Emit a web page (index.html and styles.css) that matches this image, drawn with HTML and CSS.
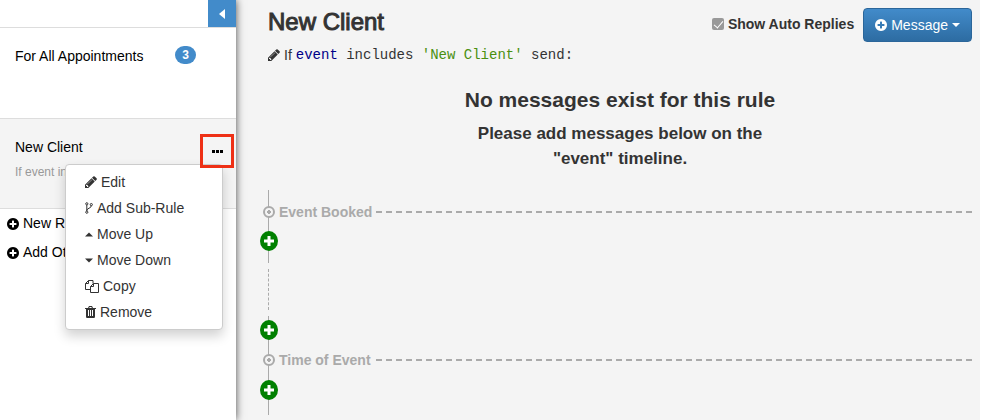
FILE: index.html
```html
<!DOCTYPE html>
<html lang="en">

<head>
    <meta charset="UTF-8">
    <meta name="viewport" content="width=device-width, initial-scale=1.0">
    <title>New Client</title>
    <link rel="stylesheet" href="styles.css">
</head>

<body>
    <!-- shared icons -->
    <svg class="sprite" aria-hidden="true">
        <symbol id="pencil" viewBox="0 0 1536 1536">
            <path d="M363 1408l91-91-235-235-91 91v107h128v128h107zM886 480q0-22-22-22-10 0-17 7l-542 542q-7 7-7 17 0 22 22 22 10 0 17-7l542-542q7-7 7-17zM832 288l416 416-832 832H0v-416zM1515 384q0 53-37 90l-166 166-416-416 166-165q36-38 90-38 53 0 91 38l235 234q37 39 37 91z" />
        </symbol>
        <symbol id="plus" viewBox="0 0 1536 1536">
            <path d="M1216 832V704q0-26-19-45t-45-19H896V384q0-26-19-45t-45-19H704q-26 0-45 19t-19 45v256H384q-26 0-45 19t-19 45v128q0 26 19 45t45 19h256v256q0 26 19 45t45 19h128q26 0 45-19t19-45V896h256q26 0 45-19t19-45zm320-64q0 209-103 385.5T1153.5 1433 768 1536t-385.5-103T103 1153.5 0 768t103-385.5T382.5 103 768 0t385.5 103T1433 382.5 1536 768z" />
        </symbol>
    </svg>

    <div class="page">
        <aside class="sidebar">
            <div class="sidebar-top">
                <button class="collapse" type="button" aria-label="Collapse sidebar">
                    <svg width="6" height="10" viewBox="0 0 6 10"><path d="M6 0v10L0 5z" /></svg>
                </button>
            </div>
            <div class="rule">
                <span class="rule-name">For All Appointments</span>
                <span class="badge">3</span>
            </div>
            <div class="rule active">
                <div class="rule-text">
                    <div class="rule-name">New Client</div>
                    <div class="rule-desc">If event includes</div>
                </div>
                <button class="more" type="button" aria-label="Rule options">
                    <svg width="11" height="3" viewBox="0 0 11 3"><path d="M0 0h3v3H0zM4 0h3v3H4zM8 0h3v3H8z" /></svg>
                </button>
                <div class="menu">
                    <button type="button"><svg width="12" height="12"><use href="#pencil" /></svg>Edit</button>
                    <button type="button">
                        <svg class="line" width="8" height="12" viewBox="0 0 8 12"><circle cx="1.8" cy="1.8" r="1.1" /><circle cx="1.8" cy="10.2" r="1.1" /><circle cx="6.3" cy="2.6" r="1.1" /><path d="M1.8 3v6M6.3 3.7c0 3-4.5 2-4.5 5" /></svg>Add Sub-Rule
                    </button>
                    <button type="button"><svg width="8" height="12" viewBox="0 0 8 12"><path d="M0 8.500L4 4.500l4 4z" /></svg>Move Up</button>
                    <button type="button"><svg width="8" height="12" viewBox="0 0 8 12"><path d="M0 4.500h8l-4 4z" /></svg>Move Down</button>
                    <button type="button">
                        <svg class="line" width="14" height="14" viewBox="0 0 14 14"><path d="M5.500 10.500h-5v-6l3-3h4.500v3M3.500 1.500v3h-3M5.500 7.500l3-3h5v9h-8zM8.500 4.500v3h-3" /></svg>Copy
                    </button>
                    <button type="button">
                        <svg width="11" height="12" viewBox="0 0 11 12"><path fill-rule="evenodd" d="M3 2l1-2h3l1 2h3v1h-1v7.500Q10 12 9 12H2Q1 12 1 10.500V3H0V2zM4.200 2h2.600L6.400 1H4.600zM3 4v6h1V4zM5 4v6h1V4zM7 4v6h1V4z" /></svg>Remove
                    </button>
                </div>
            </div>
            <div class="links">
                <a href="#"><svg width="12" height="12"><use href="#plus" /></svg>New Rule</a>
                <a href="#"><svg width="12" height="12"><use href="#plus" /></svg>Add Other</a>
            </div>
        </aside>

        <main class="content">
            <div class="head">
                <div>
                    <h1>New Client</h1>
                    <p class="condition">
                        <svg width="12" height="12"><use href="#pencil" /></svg>
                        <span>If</span>
                        <code><span class="var">event</span> includes <span class="str">'New Client'</span> send:</code>
                    </p>
                </div>
                <div class="actions">
                    <label><input type="checkbox" checked>Show Auto Replies</label>
                    <button class="message" type="button">
                        <svg width="12" height="12"><use href="#plus" /></svg>Message
                        <svg width="8" height="4" viewBox="0 0 8 4"><path d="M0 0h8L4 4z" /></svg>
                    </button>
                </div>
            </div>

            <div class="empty">
                <h2>No messages exist for this rule</h2>
                <p>Please add messages below on the<br>"event" timeline.</p>
            </div>

            <div class="timeline">
                <div class="segment">
                    <div class="event"><span class="dot"></span>Event Booked</div>
                    <button class="add" type="button" aria-label="Add message"><svg width="12" height="12" viewBox="0 0 12 12"><path d="M6 1v10M1 6h10" /></svg></button>
                </div>
                <div class="gap"></div>
                <div class="segment">
                    <button class="add" type="button" aria-label="Add message"><svg width="12" height="12" viewBox="0 0 12 12"><path d="M6 1v10M1 6h10" /></svg></button>
                    <div class="event"><span class="dot"></span>Time of Event</div>
                    <button class="add" type="button" aria-label="Add message"><svg width="12" height="12" viewBox="0 0 12 12"><path d="M6 1v10M1 6h10" /></svg></button>
                </div>
            </div>
        </main>
    </div>
</body>

</html>
```
FILE: styles.css
```css
* {
    box-sizing: border-box;
    margin: 0;
    padding: 0;
}

body {
    font-family: "Liberation Sans", Arial, sans-serif;
    font-size: 14px;
    line-height: 20px;
    color: #333;
    background: #fff;
}

button {
    font: inherit;
    color: inherit;
    border: none;
    background: none;
    cursor: pointer;
}

svg {
    fill: currentColor;
    flex: none;
}

.sprite {
    display: none;
}

.page {
    display: flex;
    min-height: 100vh;
    padding-right: 20px;
}

/* sidebar */
.sidebar {
    position: relative;
    flex: none;
    width: 236px;
    background: #fff;
    color: #000;
    box-shadow: 0 0 8px rgba(0, 0, 0, 0.7);
}

.sidebar-top {
    display: flex;
    justify-content: flex-end;
    border-bottom: 1px solid #ddd;
}

.collapse {
    display: flex;
    align-items: center;
    justify-content: center;
    width: 28px;
    height: 27px;
    background: #428bca;
    color: #fff;
}

.rule {
    position: relative;
    display: flex;
    align-items: flex-start;
    justify-content: space-between;
    min-height: 91px;
    padding: 18px 40px 0 15px;
    border-bottom: 1px solid #ddd;
}

.rule.active {
    min-height: 90px;
    padding: 15px 2px 0 15px;
    background: #f4f4f4;
}

.rule-text {
    padding-top: 3px;
}

.rule-desc {
    margin-top: 5px;
    font-size: 12px;
    color: #999;
}

.badge {
    padding: 0 7px;
    border-radius: 10px;
    background: #428bca;
    color: #fff;
    font-size: 12px;
    font-weight: bold;
    line-height: 18px;
}

.more {
    position: relative;
    z-index: 2;
    display: flex;
    align-items: center;
    justify-content: center;
    width: 34px;
    height: 34px;
    border: 3px solid #ee3015;
}

.menu {
    position: absolute;
    z-index: 1;
    top: 45px;
    right: 13px;
    width: 158px;
    padding: 4px 0;
    border: 1px solid #ccc;
    border-radius: 4px;
    background: #fff;
    color: #333;
    box-shadow: 0 6px 12px rgba(0, 0, 0, 0.18);
}

.menu button {
    display: flex;
    align-items: center;
    gap: 4px;
    width: 100%;
    padding: 0 19px;
    line-height: 26px;
}

.line {
    fill: none;
    stroke: currentColor;
}

.links {
    padding: 0 7px;
}

.links a {
    display: flex;
    align-items: center;
    gap: 4px;
    line-height: 29px;
    color: #000;
    text-decoration: none;
}

/* content */
.content {
    flex: 1;
    padding: 8px 8px 0 24px;
    background: #f4f4f4;
}

.head {
    display: flex;
    justify-content: space-between;
    padding-left: 8px;
}

h1 {
    font-size: 24px;
    font-weight: 500;
    line-height: 28px;
    -webkit-text-stroke: 1px #333;
}

.condition {
    display: flex;
    align-items: center;
    gap: 4px;
    margin-top: 9px;
}

code {
    font-family: "Liberation Mono", "Courier New", monospace;
    font-size: 14px;
}

.var {
    color: #008;
}

.str {
    color: #4a9010;
}

.actions {
    display: flex;
    align-items: flex-start;
    gap: 9px;
}

.actions label {
    display: flex;
    align-items: center;
    gap: 4px;
    padding-top: 6px;
    font-weight: bold;
}

.actions input {
    appearance: none;
    width: 12px;
    height: 12px;
    border-radius: 2px;
    background: #999;
}

.actions input:checked::before {
    content: "";
    display: block;
    width: 4px;
    height: 8px;
    margin: 1px 4px;
    border: solid #fff;
    border-width: 0 1px 1px 0;
    transform: rotate(40deg);
}

.message {
    display: flex;
    align-items: center;
    gap: 4px;
    height: 34px;
    padding: 0 11px;
    border: 1px solid #2b669a;
    border-radius: 4px;
    background: linear-gradient(#428bca, #2d6ca2);
    color: #fff;
}

.empty {
    padding: 22px 0 0 8px;
    text-align: center;
    font-weight: bold;
}

h2 {
    font-size: 21px;
    line-height: 26px;
}

.empty p {
    margin-top: 8px;
    font-size: 17px;
    line-height: 25px;
}

/* timeline */
.timeline {
    margin-top: 19px;
}

.segment {
    display: flex;
    flex-direction: column;
    align-items: flex-start;
    gap: 8px;
    padding: 11px 0 12px;
    background: linear-gradient(#aaa, #aaa) 8px 0 / 1px 100% no-repeat;
}

.segment:last-child {
    gap: 9px;
    padding: 4px 0 15px;
}

.gap {
    height: 41px;
    margin: 6px 8px;
    border-left: 1px dashed #aaa;
}

.event {
    display: flex;
    align-items: center;
    gap: 4px;
    width: 100%;
    padding-left: 3px;
    font-weight: bold;
    line-height: 22px;
    color: #aaa;
}

/* dashed rule that fills the rest of the row */
.event::after {
    content: "";
    flex: 1;
    height: 2px;
    background: repeating-linear-gradient(to left, #aaa 0 6px, transparent 6px 10px);
}

.dot {
    width: 12px;
    height: 12px;
    border: 2px solid #aaa;
    border-radius: 50%;
    background: radial-gradient(#aaa 2px, #f4f4f4 2px);
}

.add {
    display: flex;
    align-items: center;
    justify-content: center;
    width: 18px;
    height: 20px;
    border-radius: 50%;
    background: #008000;
}

.add svg {
    stroke: #fff;
    stroke-width: 3;
}
```
